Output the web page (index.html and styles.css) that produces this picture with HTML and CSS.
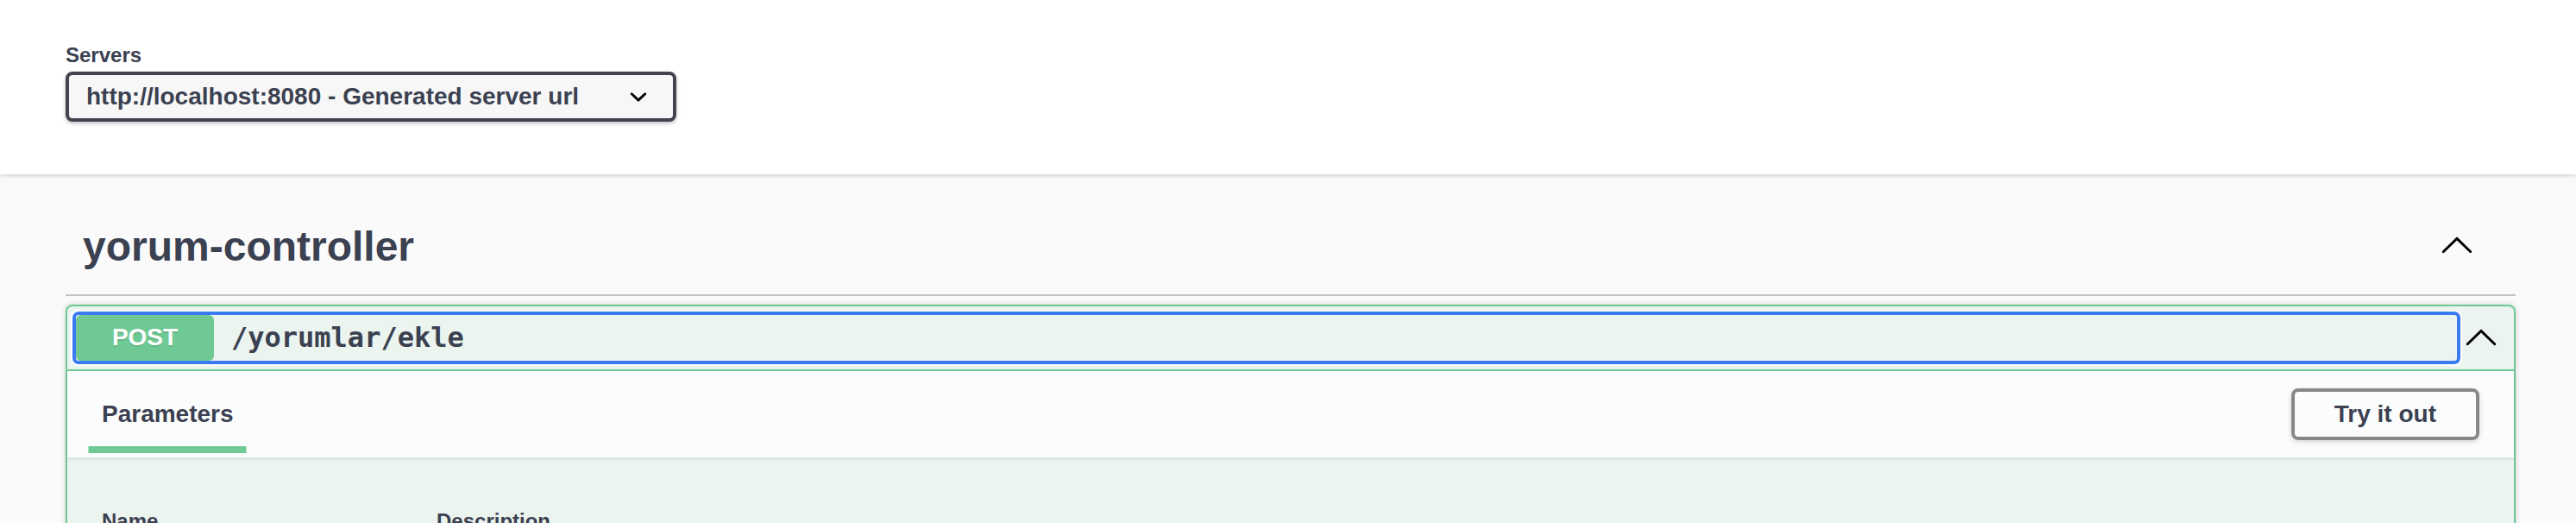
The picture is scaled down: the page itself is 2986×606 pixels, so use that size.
FILE: index.html
```html
<!DOCTYPE html>
<html lang="en">
<head>
<meta charset="utf-8">
<title>Swagger UI</title>
<link rel="stylesheet" href="styles.css">
</head>
<body>
<div class="scheme-container">
  <div class="wrapper">
    <div class="servers">
      <label class="servers-title">Servers</label>
      <div class="select">
        <span class="select-text">http://localhost:8080 - Generated server url</span>
        <svg class="select-arrow" width="40" height="40" viewBox="0 0 20 20"><path d="M13.418 7.859a.695.695 0 01.978 0 .68.68 0 010 .969l-3.908 3.83a.697.697 0 01-.979 0l-3.908-3.830a.68.68 0 010-.969.695.695 0 01.978 0L10 11l3.418-3.141z" fill="#000"/></svg>
      </div>
    </div>
  </div>
</div>
<div class="wrapper main">
  <div class="tag-section">
    <h3 class="opblock-tag">
      <span class="tag-name">yorum-controller</span>
      <button class="expand-operation" type="button">
        <svg width="40" height="40" viewBox="0 0 20 20"><path transform="rotate(180 10 10)" d="M17.418 6.109c.272-.268.709-.268.979 0s.271.701 0 .969l-7.908 7.83c-.27.268-.707.268-.979 0l-7.908-7.83c-.27-.268-.27-.701 0-.969.271-.268.709-.268.979 0L10 13.25l7.418-7.141z" fill="#000"/></svg>
      </button>
    </h3>
    <div class="opblock">
      <div class="opblock-summary">
        <div class="summary-control">
          <span class="method">POST</span>
          <span class="path">/yorumlar/ekle</span>
        </div>
        <div class="control-arrow">
          <svg width="40" height="40" viewBox="0 0 20 20"><path transform="rotate(180 10 10)" d="M17.418 6.109c.272-.268.709-.268.979 0s.271.701 0 .969l-7.908 7.83c-.27.268-.707.268-.979 0l-7.908-7.83c-.27-.268-.27-.701 0-.969.271-.268.709-.268.979 0L10 13.25l7.418-7.141z" fill="#000"/></svg>
        </div>
      </div>
      <div class="section-header">
        <div class="tab-header">
          <div class="tab-item active"><h4 class="tab-title"><span>Parameters</span></h4></div>
        </div>
        <button class="btn try-out" type="button">Try it out</button>
      </div>
      <div class="table-container">
        <table class="parameters">
          <thead>
            <tr><th class="col-name">Name</th><th class="col-desc">Description</th></tr>
          </thead>
        </table>
      </div>
    </div>
  </div>
</div>
</body>
</html>
```

FILE: styles.css
```css
* { box-sizing: border-box; }

html, body {
  margin: 0;
  padding: 0;
}

body {
  background: #fafafa;
  font-family: "Liberation Sans", Arial, sans-serif;
  color: #3b4151;
  overflow: hidden;
}

.wrapper {
  max-width: 2840px;
  margin: 0 70px 0 76px;
}

/* Servers bar */
.scheme-container {
  background: #fff;
  box-shadow: 0 2px 4px 0 rgba(0, 0, 0, 0.15);
  padding: 50px 0 61px;
  position: relative;
  z-index: 1;
}

.servers {
  display: flex;
  flex-direction: column;
  align-items: flex-start;
}

.servers-title {
  display: block;
  font-size: 24px;
  line-height: 28px;
  font-weight: 700;
  color: #3b4151;
}

.select {
  margin-top: 5px;
  width: 708px;
  height: 58px;
  display: flex;
  align-items: center;
  padding: 0 20px;
  background: #f7f7f7;
  border: 4px solid #41444e;
  border-radius: 8px;
  box-shadow: 0 2px 4px 0 rgba(0, 0, 0, 0.25);
}

.select-text {
  font-size: 28px;
  font-weight: 700;
  color: #3b4151;
  white-space: nowrap;
}

.select-arrow {
  margin-left: auto;
  flex: none;
}

/* Main */
.main {
  padding-top: 40px;
}

.opblock-tag {
  display: flex;
  align-items: center;
  min-height: 60px;
  box-sizing: content-box;
  margin: 0 0 10px;
  padding: 13px 40px 26px 20px;
  border-bottom: 2px solid rgba(59, 65, 81, 0.3);
  font-size: 48px;
  font-weight: 700;
  color: #3b4151;
}

.tag-name {
  flex: 1;
}

.expand-operation {
  flex: none;
  display: flex;
  align-items: center;
  background: none;
  border: none;
  padding: 0 8px 0 0;
  margin: 0;
}

.expand-operation svg,
.control-arrow svg {
  display: block;
}

/* Operation block */
.opblock {
  border: 2px solid #6fc994;
  border-radius: 8px;
  background: #ebf4ef;
  box-shadow: 0 0 6px rgba(0, 0, 0, 0.19);
  margin: 0 0 30px;
}

.opblock-summary {
  display: flex;
  align-items: center;
  padding: 10px;
  border-bottom: 2px solid #6fc994;
}

.summary-control {
  flex: 1;
  display: flex;
  align-items: center;
  outline: 4px solid #3a7bf2;
  border-radius: 3px;
  box-shadow: 0 0 0 6px #fff;
}

.method {
  min-width: 160px;
  height: 53px;
  display: flex;
  align-items: center;
  justify-content: center;
  padding-bottom: 2px;
  background: #6fc994;
  color: #fff;
  font-size: 28px;
  font-weight: 700;
  border-radius: 6px;
  text-shadow: 0 2px 0 rgba(0, 0, 0, 0.1);
}

.path {
  padding: 0 20px 2px;
  font-family: "DejaVu Sans Mono", "Liberation Mono", monospace;
  font-size: 32px;
  font-weight: 700;
  color: #3b4151;
}

.control-arrow {
  flex: none;
  width: 56px;
  display: flex;
  justify-content: center;
  align-items: center;
}

/* Section header */
.section-header {
  display: flex;
  align-items: center;
  min-height: 100px;
  padding: 16px 40px;
  background: rgba(255, 255, 255, 0.8);
  box-shadow: 0 2px 4px rgba(0, 0, 0, 0.1);
}

.tab-header {
  flex: 1;
  display: flex;
}

.tab-title {
  margin: 0;
  font-size: 28px;
  font-weight: 700;
  color: #3b4151;
}

.tab-title span {
  position: relative;
}

.tab-item.active .tab-title span::after {
  content: "";
  position: absolute;
  bottom: -30px;
  left: 50%;
  width: 120%;
  height: 8px;
  transform: translateX(-50%);
  background: #6fc994;
}

.btn {
  font-family: "Liberation Sans", Arial, sans-serif;
  font-size: 28px;
  font-weight: 700;
  color: #3b4151;
  background: transparent;
  border: 4px solid #888;
  border-radius: 8px;
  padding: 10px 46px;
  line-height: 32px;
  box-shadow: 0 2px 6px rgba(0, 0, 0, 0.15);
}

/* Table */
.table-container {
  padding: 36px 40px 40px;
}

.parameters {
  width: 100%;
  border-collapse: collapse;
}

.parameters th {
  text-align: left;
  font-size: 24px;
  font-weight: 700;
  color: #3b4151;
  padding: 24px 0;
  border-bottom: 2px solid rgba(59, 65, 81, 0.2);
}

.col-name {
  width: 388px;
}
```
